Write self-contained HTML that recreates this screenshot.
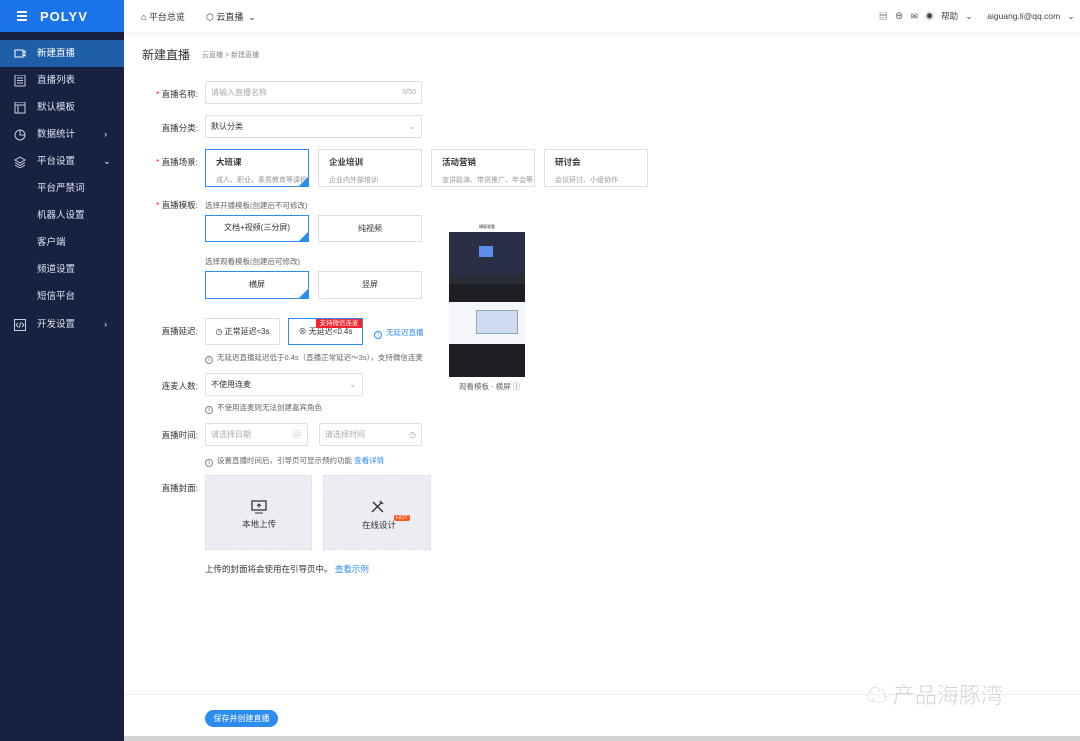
<!DOCTYPE html>
<html><head><meta charset="utf-8"><style>
*{margin:0;padding:0;box-sizing:border-box}
body{width:1080px;height:741px;overflow:hidden;background:#fff;font-family:"Liberation Sans","Noto Sans CJK SC",sans-serif;font-size:9px;color:#333;position:relative}
.a{position:absolute}
.side{left:0;top:0;width:124px;height:741px;background:#172142}
.logo{left:0;top:0;width:124px;height:32px;background:#1a73e8;color:#fff}
.mi{position:absolute;left:0;width:124px;height:27px;color:#dfe3ee;font-size:9.5px;line-height:27px;padding-left:37px}
.mi svg{position:absolute;left:14px;top:8px}
.hd{left:124px;top:0;width:956px;height:32px;background:#fff;box-shadow:0 2px 4px rgba(0,0,0,.05)}
.lbl{position:absolute;right:882px;font-size:8.5px;color:#333;text-align:right}
.req:before{content:"* ";color:#f5222d}
.in{position:absolute;border:1px solid #dcdfe6;border-radius:2px;background:#fff;font-size:8px;color:#aaa;padding-left:5px}
.card{position:absolute;border:1px solid #dcdfe6;background:#fff;font-size:8px;text-align:center;color:#333}
.sel{border:1.5px solid #2d8cf0}
.sel:after{content:"";position:absolute;right:0;bottom:0;border-left:9px solid transparent;border-bottom:9px solid #2d8cf0}
.tip{position:absolute;font-size:7.5px;color:#666}
.tip i{display:inline-block;width:8px;height:8px;border:1px solid #888;border-radius:50%;font-style:normal;font-size:6px;text-align:center;line-height:6px;margin-right:4px;vertical-align:-1px}
.blue{color:#2d8cf0}
.sc{text-align:left;padding:6px 0 0 10px;overflow:hidden}
.sc div{color:#999;font-size:7px;margin-top:7px;white-space:nowrap}
</style></head><body>
<div class="a side"></div>
<div class="a logo">
<div class="a" style="left:17px;top:11px;width:10px;height:1.5px;background:#fff;box-shadow:0 4px 0 #fff,0 8px 0 #fff"></div>
<div class="a" style="left:40px;top:9px;font-size:13px;font-weight:bold;letter-spacing:1px">POLYV</div>
</div>
<div class="mi" style="top:40px;background:#1f5ea8;color:#fff"><svg width="12" height="10"><rect x="1" y="2" width="8" height="7" fill="none" stroke="#fff"/><path d="M9 4l2-1v5l-2-1" fill="none" stroke="#fff"/></svg>新建直播</div>
<div class="mi" style="top:67px"><svg width="12" height="12"><rect x="1" y="0" width="10" height="11" fill="none" stroke="#ccd"/><path d="M3 3h6M3 5.5h6M3 8h6" stroke="#ccd"/></svg>直播列表</div>
<div class="mi" style="top:94px"><svg width="12" height="12"><rect x="1" y="0" width="10" height="11" fill="none" stroke="#ccd"/><path d="M1 3h10M4 3v8" stroke="#ccd"/></svg>默认模板</div>
<div class="mi" style="top:121px"><svg width="12" height="12"><circle cx="6" cy="6" r="5" fill="none" stroke="#ccd"/><path d="M6 1v5h5" fill="none" stroke="#ccd"/></svg>数据统计<span class="a" style="left:104px">›</span></div>
<div class="mi" style="top:148px"><svg width="12" height="12"><path d="M6 1l5 3-5 3-5-3z M1 6.5l5 3 5-3 M1 9l5 3 5-3" fill="none" stroke="#ccd"/></svg>平台设置<span class="a" style="left:103px">⌄</span></div>
<div class="mi" style="top:175px">平台严禁词</div>
<div class="mi" style="top:202px">机器人设置</div>
<div class="mi" style="top:229px">客户端</div>
<div class="mi" style="top:256px">频道设置</div>
<div class="mi" style="top:283px">短信平台</div>
<div class="mi" style="top:311px"><svg width="12" height="12"><rect x="0.5" y="0.5" width="11" height="11" fill="none" stroke="#ccd"/><path d="M4 4l-2 2 2 2M8 4l2 2-2 2M7 3l-2 6" fill="none" stroke="#ccd"/></svg>开发设置<span class="a" style="left:104px">›</span></div>

<div class="a hd">
<div class="a" style="left:17px;top:10px;font-size:9px;color:#333">⌂ 平台总览</div>
<div class="a" style="left:82px;top:10px;font-size:9px;color:#333">⬡ 云直播 &nbsp;⌄</div>
<div class="a" style="left:755px;top:10px;font-size:8.5px;color:#444;word-spacing:5px">▤ ⊕ ✉ ◉ 帮助 ⌄ &nbsp;aiguang.li@qq.com ⌄</div>
</div>

<div class="a" style="left:142px;top:46px;font-size:12px;color:#333">新建直播</div>
<div class="a" style="left:202px;top:50px;font-size:7px;color:#888">云直播 &gt; 新建直播</div>

<div class="lbl req" style="top:88px">直播名称:</div>
<div class="in" style="left:205px;top:81px;width:217px;height:23px;line-height:21px">请输入直播名称<span class="a" style="right:5px;font-size:7px">0/50</span></div>
<div class="lbl" style="top:122px">直播分类:</div>
<div class="in" style="left:205px;top:115px;width:217px;height:23px;line-height:21px;color:#333">默认分类<span class="a" style="right:6px;color:#aaa">⌄</span></div>
<div class="lbl req" style="top:156px">直播场景:</div>
<div class="card sel sc" style="left:205px;top:149px;width:104px;height:38px"><b style="font-size:8.5px">大班课</b><div>成人、职业、素质教育等课程</div></div>
<div class="card sc" style="left:318px;top:149px;width:104px;height:38px"><b style="font-size:8.5px">企业培训</b><div>企业内外部培训</div></div>
<div class="card sc" style="left:431px;top:149px;width:104px;height:38px"><b style="font-size:8.5px">活动营销</b><div>宣讲路演、带货推广、年会等</div></div>
<div class="card sc" style="left:544px;top:149px;width:104px;height:38px"><b style="font-size:8.5px">研讨会</b><div>会议研讨、小组协作</div></div>

<div class="lbl req" style="top:199px">直播模板:</div>
<div class="tip" style="left:205px;top:200px">选择开播模板(创建后不可修改)</div>
<div class="card sel" style="left:205px;top:215px;width:104px;height:27px;line-height:24px">文档+视频(三分屏)</div>
<div class="card" style="left:318px;top:215px;width:104px;height:27px;line-height:25px">纯视频</div>
<div class="tip" style="left:205px;top:256px">选择观看模板(创建后可修改)</div>
<div class="card sel" style="left:205px;top:271px;width:104px;height:28px;line-height:25px">横屏</div>
<div class="card" style="left:318px;top:271px;width:104px;height:28px;line-height:26px">竖屏</div>

<div class="a" style="left:449px;top:215px;width:76px;height:162px;background:#fff">
<div class="a" style="left:0;top:0;width:76px;height:17px;background:#fff;font-size:4px;text-align:center;line-height:24px">横屏观看</div>
<div class="a" style="left:0;top:17px;width:76px;height:43px;background:#2b2f45"><div class="a" style="left:30px;top:14px;width:14px;height:11px;background:#5b8def"></div></div>
<div class="a" style="left:0;top:60px;width:76px;height:9px;background:#2a2c36"></div>
<div class="a" style="left:0;top:69px;width:76px;height:18px;background:#1e1f24"></div>
<div class="a" style="left:0;top:87px;width:76px;height:42px;background:#f4f6f9"><div class="a" style="left:27px;top:8px;width:42px;height:24px;background:#cfdcf0;border:1px solid #8ab"></div></div>
<div class="a" style="left:0;top:129px;width:76px;height:33px;background:#1e1f24"></div>
</div>
<div class="tip" style="left:459px;top:381px">观看模板 - 横屏 ⓘ</div>

<div class="lbl" style="top:325px">直播延迟:</div>
<div class="card" style="left:205px;top:318px;width:75px;height:27px;line-height:25px">◷ 正常延迟≈3s</div>
<div class="card" style="left:288px;top:318px;width:75px;height:27px;line-height:26px;border:1.5px solid #2d8cf0">⊗ 无延迟&lt;0.4s</div>
<div class="a" style="left:316px;top:319px;width:46px;height:9px;background:#f5222d;color:#fff;font-size:6.5px;line-height:9px;text-align:center">支持微信连麦</div>
<div class="tip blue" style="left:374px;top:327px"><i style="border-color:#2d8cf0">i</i>无延迟直播</div>
<div class="tip" style="left:205px;top:352px"><i>i</i>无延迟直播延迟低于0.4s（直播正常延迟～3s），支持微信连麦</div>

<div class="lbl" style="top:380px">连麦人数:</div>
<div class="in" style="left:205px;top:373px;width:158px;height:23px;line-height:21px;color:#333">不使用连麦<span class="a" style="right:6px;color:#aaa">⌄</span></div>
<div class="tip" style="left:205px;top:402px"><i>i</i>不使用连麦则无法创建嘉宾角色</div>

<div class="lbl" style="top:429px">直播时间:</div>
<div class="in" style="left:205px;top:423px;width:103px;height:23px;line-height:21px">请选择日期<span class="a" style="right:6px">▤</span></div>
<div class="in" style="left:319px;top:423px;width:103px;height:23px;line-height:21px">请选择时间<span class="a" style="right:5px">◷</span></div>
<div class="tip" style="left:205px;top:455px"><i>i</i>设置直播时间后，引导页可显示预约功能 <span class="blue">查看详情</span></div>

<div class="lbl" style="top:482px">直播封面:</div>
<div class="a" style="left:205px;top:475px;width:107px;height:75px;background:#ebedf3;border:1px dashed #dde">
<svg class="a" style="left:45px;top:24px" width="16" height="14"><rect x="1" y="1" width="14" height="9" fill="none" stroke="#333" stroke-width="1.3"/><path d="M8 8V4M6 6l2-2 2 2M4 13h8" fill="none" stroke="#333"/></svg>
<div class="a" style="left:36px;top:42px;font-size:8.5px;color:#333">本地上传</div></div>
<div class="a" style="left:323px;top:475px;width:108px;height:75px;background:#ebedf3;border:1px dashed #dde">
<svg class="a" style="left:46px;top:23px" width="15" height="15"><path d="M2 13L12 3M3 3l10 10M10 2l3 3" fill="none" stroke="#333" stroke-width="1.4"/></svg>
<div class="a" style="left:38px;top:43px;font-size:8.5px;color:#333">在线设计</div>
<div class="a" style="left:70px;top:39px;background:#ff5a1f;color:#fff;font-size:5.5px;padding:0 2px;border-radius:2px">HOT</div></div>
<div class="a" style="left:205px;top:563px;font-size:8.5px;color:#333">上传的封面将会使用在引导页中。 <span class="blue">查看示例</span></div>

<div class="a" style="left:124px;top:694px;width:956px;height:1px;background:#eee"></div>
<div class="a" style="left:866px;top:678px;font-size:22px;color:#d4d4d4;font-family:'Noto Sans CJK SC',sans-serif;font-weight:300;white-space:nowrap">☁ 产品海豚湾</div>
<div class="a" style="left:205px;top:710px;width:73px;height:17px;border-radius:9px;background:#2d8cf0;color:#fff;font-size:8px;text-align:center;line-height:17px">保存并创建直播</div>
<div class="a" style="left:124px;top:736px;width:956px;height:5px;background:#d4d4d4"></div>
</body></html>
